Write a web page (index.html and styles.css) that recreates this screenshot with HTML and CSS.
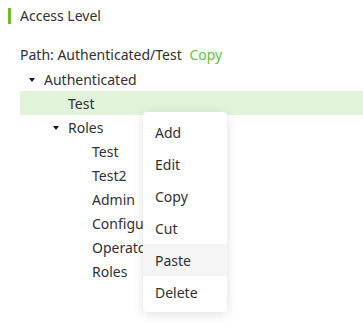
FILE: index.html
```html
<!DOCTYPE html>
<html>
<head>
<meta charset="utf-8">
<link rel="stylesheet" href="styles.css">
</head>
<body>
<div class="page">
  <div class="title">Access Level</div>
  <div class="path">Path: Authenticated/Test <span class="copy">Copy</span></div>
  <div class="tree">
    <div class="row"><span class="caret"></span><span>Authenticated</span></div>
    <div class="row l1 current"><span class="caret empty"></span><span>Test</span></div>
    <div class="row l1"><span class="caret"></span><span>Roles</span></div>
    <div class="row l2"><span class="caret empty"></span><span>Test</span></div>
    <div class="row l2"><span class="caret empty"></span><span>Test2</span></div>
    <div class="row l2"><span class="caret empty"></span><span>Admin</span></div>
    <div class="row l2"><span class="caret empty"></span><span>Configuration</span></div>
    <div class="row l2"><span class="caret empty"></span><span>Operator</span></div>
    <div class="row l2"><span class="caret empty"></span><span>Roles</span></div>
  </div>
  <ul class="menu">
    <li>Add</li>
    <li>Edit</li>
    <li>Copy</li>
    <li>Cut</li>
    <li class="hover">Paste</li>
    <li>Delete</li>
  </ul>
</div>
</body>
</html>
```
FILE: styles.css
```css
* { box-sizing: border-box; }
html, body { margin: 0; padding: 0; background: #fff; }
body {
  font-family: "Noto Sans", "Open Sans", sans-serif;
  font-size: 14px;
  color: #303133;
}
.page { position: relative; padding: 8px 0 0 8px; height: 333px; overflow: hidden; }
.title {
  border-left: 3px solid #6cc11f;
  padding-left: 9px;
  line-height: 16px;
  height: 16px;
}
.path {
  margin-top: 19px;
  padding-left: 12px;
  line-height: 24px;
}
.copy { color: #67c23a; margin-left: 4px; }
.tree { margin-left: 12px; }
.row {
  display: flex;
  align-items: center;
  height: 24px;
  white-space: nowrap;
}
.row.l1 { padding-left: 24px; }
.row.l2 { padding-left: 48px; }
.row.current { background: #e1f3d8; }
.caret {
  width: 24px;
  height: 24px;
  flex: none;
  position: relative;
}
.caret::after {
  content: "";
  position: absolute;
  left: 8.5px;
  top: 11px;
  border-left: 3.5px solid transparent;
  border-right: 3.5px solid transparent;
  border-top: 4.5px solid #1a1a1a;
}
.caret.empty::after { display: none; }
.menu {
  position: absolute;
  left: 143px;
  top: 112px;
  width: 84px;
  margin: 0;
  padding: 4px 0;
  list-style: none;
  background: #fff;
  border-radius: 4px;
  box-shadow: 0 2px 12px 0 rgba(0,0,0,0.12);
}
.menu li {
  height: 32px;
  line-height: 32px;
  padding: 1px 0 0 12px;
  color: #303133;
}
.menu li.hover { background: #f5f5f5; }
```
